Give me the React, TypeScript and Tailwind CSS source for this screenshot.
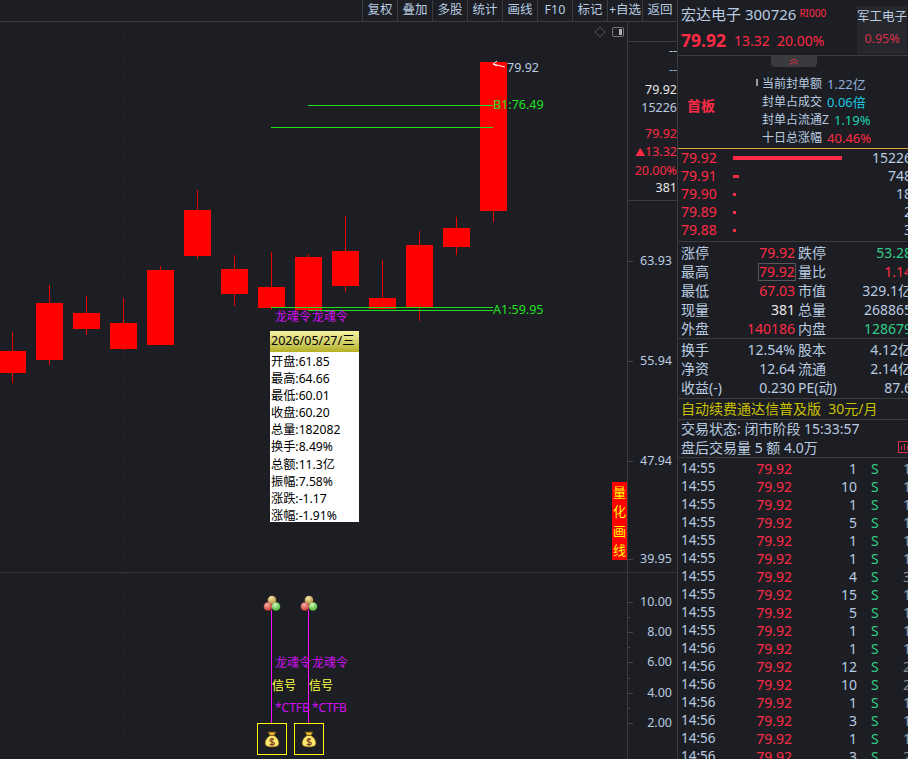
const RED = "text-[#ff2a45]";

const tools = ["复权", "叠加", "多股", "统计", "画线", "F10", "标记", "+自选", "返回"];

// x, bodyTop, bodyBottom, wickTop, wickBottom (page coordinates)
const candles = [
  [-1, 351, 373, 332, 383],
  [36, 303, 360, 285, 365],
  [73, 313, 329, 296, 335],
  [110, 323, 349, 298, 350],
  [147, 270, 345, 266, 345],
  [184, 210, 256, 190, 259],
  [221, 269, 294, 255, 306],
  [258, 287, 308, 252, 310],
  [295, 257, 310, 254, 310],
  [332, 251, 286, 216, 292],
  [369, 298, 309, 260, 310],
  [406, 245, 307, 231, 321],
  [443, 228, 247, 217, 255],
  [480, 62, 211, 62, 222],
];

const tipRows = [
  "开盘:61.85",
  "最高:64.66",
  "最低:60.01",
  "收盘:60.20",
  "总量:182082",
  "换手:8.49%",
  "总额:11.3亿",
  "振幅:7.58%",
  "涨跌:-1.17",
  "涨幅:-1.91%",
];

const book = [
  ["79.92", 109, 4, "15226"],
  ["79.91", 6, 3, "748"],
  ["79.90", 3, 3, "18"],
  ["79.89", 3, 3, "2"],
  ["79.88", 3, 3, "3"],
] as const;

const trades = [
  ["14:55", "1", "1"],
  ["14:55", "10", "1"],
  ["14:55", "1", "1"],
  ["14:55", "5", "1"],
  ["14:55", "1", "1"],
  ["14:55", "1", "1"],
  ["14:55", "4", "3"],
  ["14:55", "15", "1"],
  ["14:55", "5", "1"],
  ["14:55", "1", "1"],
  ["14:56", "1", "1"],
  ["14:56", "12", "2"],
  ["14:56", "10", "2"],
  ["14:56", "1", "1"],
  ["14:56", "3", "1"],
  ["14:56", "1", "1"],
  ["14:56", "3", "2"],
];

function Balls({ left }: { left: number }) {
  return (
    <svg className="absolute" style={{ left, top: 22 }} width="18" height="17" viewBox="0 0 18 17">
      <defs>
        <radialGradient id="by" cx="0.4" cy="0.3" r="0.8">
          <stop offset="0" stopColor="#f4e6b0" />
          <stop offset="1" stopColor="#a87e20" />
        </radialGradient>
        <radialGradient id="br" cx="0.4" cy="0.3" r="0.8">
          <stop offset="0" stopColor="#f8b0a8" />
          <stop offset="1" stopColor="#c02820" />
        </radialGradient>
        <radialGradient id="bg" cx="0.4" cy="0.3" r="0.8">
          <stop offset="0" stopColor="#d0f8b8" />
          <stop offset="1" stopColor="#38a828" />
        </radialGradient>
      </defs>
      <circle cx="9" cy="5" r="4.3" fill="url(#by)" />
      <circle cx="5" cy="11.5" r="4.3" fill="url(#br)" />
      <circle cx="13" cy="11.5" r="4.3" fill="url(#bg)" />
    </svg>
  );
}

function MoneyBag({ left }: { left: number }) {
  return (
    <div className="absolute top-[150px] flex h-[32px] w-[30px] items-center justify-center border border-[#ffff00]" style={{ left }}>
      <svg width="16" height="17" viewBox="0 0 16 17">
        <path d="M4 1 L12 1 L10 4.5 L6 4.5 Z" fill="#e8b830" stroke="#6a4a10" strokeWidth="0.8" />
        <path d="M6 4.5 L10 4.5 C13 6.5 15 9 15 12 C15 15 12.5 16 8 16 C3.5 16 1 15 1 12 C1 9 3 6.5 6 4.5 Z" fill="#ffe870" stroke="#6a4a10" strokeWidth="0.8" />
        <path d="M10 8.5 C9 7.5 6 7.5 6 9.5 C6 11.5 10.5 10.5 10.5 12.5 C10.5 14.2 7 14.2 5.8 13 M8 6.8 L8 15" fill="none" stroke="#7a3a20" strokeWidth="1.1" />
      </svg>
    </div>
  );
}

function AxisLabel({ y, tight, children }: { y: number; tight?: boolean; children: React.ReactNode }) {
  return (
    <div className={`absolute -translate-y-1/2 whitespace-nowrap text-[12.5px] leading-none text-[#b9cbe0] ${tight ? "right-0" : "right-[5px]"}`} style={{ top: y + 1 }}>
      {children}
    </div>
  );
}

function Stat({ a, b, aClass, c, d, dClass, box }: { a: string; b: string; aClass: string; c: string; d: string; dClass: string; box?: boolean }) {
  return (
    <div className="flex h-[18.8px] items-center text-[14px] leading-none">
      <span className="w-[50px] shrink-0 whitespace-nowrap text-[#b9cbe0]">{a}</span>
      <span className="flex w-[64px] shrink-0 justify-end">
        <span className={`flex h-[18px] items-center ${aClass} ${box ? "w-[38px] -mr-[1px] justify-center border border-[#55575c]" : ""}`}>{b}</span>
      </span>
      <span className="ml-[3px] w-[56px] shrink-0 whitespace-nowrap text-[#b9cbe0]">{c}</span>
      <span className={`w-[58px] shrink-0 whitespace-nowrap text-right ${dClass}`}>{d}</span>
    </div>
  );
}

function Info({ label, value, color }: { label: string; value: string; color: string }) {
  return (
    <div className="flex h-[18px] items-center gap-[5px] whitespace-nowrap leading-none">
      <span className="text-[12px] text-[#b9cbe0]">{label}</span>
      <span className={`text-[13px] ${color}`}>{value}</span>
    </div>
  );
}

export default function App() {
  return (
    <div className="flex h-[759px] w-[908px] overflow-hidden bg-[#1c1e23] [font-family:'Noto_Sans','Noto_Sans_CJK_SC',sans-serif]">
      {/* left: chart */}
      <div className="flex h-full w-[678px] shrink-0 flex-col border-r border-[#3a3c40]">
        <div className="flex h-[22px] shrink-0 justify-end border-b border-[#3a3c40]">
          {tools.map((t) => (
            <div key={t} className="flex w-[35px] items-center justify-center whitespace-nowrap border-l border-[#3a3c40] text-[12.5px] leading-none text-[#b9cbe0]">
              {t}
            </div>
          ))}
        </div>

        <div className="flex h-[551px] shrink-0 border-b border-[#33353a]">
          <div className="relative w-[627px] shrink-0 overflow-hidden">
            <svg className="absolute inset-0" width="627" height="550" viewBox="0 22 627 550" shapeRendering="crispEdges">
              <line x1="123.5" y1="22" x2="123.5" y2="572" stroke="#26282d" strokeDasharray="2 3" />
              {candles.map(([x, t, b, wt, wb]) => (
                <g key={x}>
                  <rect x={x + 13} y={wt} width="1" height={wb - wt} fill="#e80000" />
                  <rect x={x} y={t} width="27" height={b - t} fill="#ff0000" />
                </g>
              ))}
              <rect x="308" y="105" width="185" height="1" fill="#1ee01e" />
              <rect x="271" y="127" width="222" height="1" fill="#1ee01e" />
              <rect x="271" y="307" width="222" height="1" fill="#1ee01e" />
              <rect x="308" y="310" width="185" height="1" fill="#1ee01e" />
              <path d="M493 64 L505 67 M493 64 L497 61 M493 64 L497 66" stroke="#fff" fill="none" shapeRendering="auto" />
              <path d="M600 27 L605 32 L600 37 L595 32 Z" fill="none" stroke="#55575c" shapeRendering="auto" />
              <rect x="612.5" y="27.5" width="11" height="9" rx="1.5" fill="none" stroke="#77797e" shapeRendering="auto" />
              <rect x="619" y="29" width="3" height="6" fill="#b0b2b6" />
            </svg>

            <div className="absolute left-[507px] top-[40px] text-[12.5px] leading-none text-[#b9cbe0]">79.92</div>
            <div className="absolute left-[493px] top-[77px] text-[12.5px] leading-none text-[#1ee01e]">B1:76.49</div>
            <div className="absolute left-[493px] top-[282px] text-[12.5px] leading-none text-[#1ee01e]">A1:59.95</div>
            <div className="absolute left-[275px] top-[289px] text-[12px] leading-none text-[#d010f0]">龙魂令</div>
            <div className="absolute left-[312px] top-[289px] text-[12px] leading-none text-[#d010f0]">龙魂令</div>

            {/* hover tooltip */}
            <div className="absolute left-[270px] top-[309px] h-[191px] w-[89px] bg-white text-[12.2px] text-black">
              <div className="flex h-[21px] items-center whitespace-nowrap bg-gradient-to-b from-[#f6f4a4] to-[#b5b020] pl-[1px] text-[12.5px] leading-none">2026/05/27/三</div>
              <div className="pt-[1px]">
                {tipRows.map((r) => (
                  <div key={r} className="flex h-[17.1px] items-center whitespace-nowrap pl-[1px] pt-[1px] leading-none">{r}</div>
                ))}
              </div>
            </div>

            <div className="absolute left-[612px] top-[460px] flex h-[78px] w-[15px] flex-col items-center justify-between bg-[#ff0000] py-[1px] text-[13px] leading-[18px] text-[#ffff00]">
              <span>量</span>
              <span>化</span>
              <span>画</span>
              <span>线</span>
            </div>
          </div>

          <div className="relative w-[50px] shrink-0 border-l border-[#3a3c40]">
            <div className="h-[20px] border-b border-[#3a3c40]" />
            <AxisLabel y={28} tight>--</AxisLabel>
            <AxisLabel y={47} tight><span className="text-[#8fb0d8]">--</span></AxisLabel>
            <AxisLabel y={67} tight><span className="text-[#e8e8e8]">79.92</span></AxisLabel>
            <AxisLabel y={85} tight>15226</AxisLabel>
            <AxisLabel y={111} tight><span className={RED}>79.92</span></AxisLabel>
            <AxisLabel y={129} tight><span className={RED}><span className="text-[10px]">▲</span>13.32</span></AxisLabel>
            <AxisLabel y={148} tight><span className={RED}>20.00%</span></AxisLabel>
            <AxisLabel y={165} tight><span className="text-[#e8e8e8]">381</span></AxisLabel>
            <div className="absolute left-0 top-[178px] h-px w-full bg-[#3a3c40]" />
            <AxisLabel y={238}>63.93</AxisLabel>
            <AxisLabel y={338}>55.94</AxisLabel>
            <AxisLabel y={438}>47.94</AxisLabel>
            <AxisLabel y={536}>39.95</AxisLabel>
            {[239, 339, 439, 537].map((y) => (
              <div key={y} className="absolute left-0 h-px w-[5px] bg-[#44464b]" style={{ top: y }} />
            ))}
          </div>
        </div>

        <div className="flex min-h-0 flex-1">
          <div className="relative w-[627px] shrink-0 overflow-hidden">
            <svg className="absolute inset-0" width="627" height="186" viewBox="0 573 627 186" shapeRendering="crispEdges">
              <line x1="123.5" y1="573" x2="123.5" y2="759" stroke="#26282d" strokeDasharray="2 3" />
              <rect x="271" y="610" width="1" height="113" fill="#ff10ff" />
              <rect x="308" y="610" width="1" height="113" fill="#ff10ff" />
            </svg>
            <Balls left={263} />
            <Balls left={300} />
            <div className="absolute left-[275px] top-[84px] text-[12px] leading-none text-[#d010f0]">龙魂令</div>
            <div className="absolute left-[312px] top-[84px] text-[12px] leading-none text-[#d010f0]">龙魂令</div>
            <div className="absolute left-[272px] top-[107px] text-[12px] leading-none text-[#ffff40]">信号</div>
            <div className="absolute left-[309px] top-[107px] text-[12px] leading-none text-[#ffff40]">信号</div>
            <div className="absolute left-[275px] top-[129px] text-[12px] leading-none text-[#d010f0]">*CTFB</div>
            <div className="absolute left-[312px] top-[129px] text-[12px] leading-none text-[#d010f0]">*CTFB</div>
            <MoneyBag left={257} />
            <MoneyBag left={294} />
          </div>
          <div className="relative w-[50px] shrink-0 border-l border-[#3a3c40]">
            <AxisLabel y={28}>10.00</AxisLabel>
            <AxisLabel y={58}>8.00</AxisLabel>
            <AxisLabel y={88}>6.00</AxisLabel>
            <AxisLabel y={119}>4.00</AxisLabel>
            <AxisLabel y={149}>2.00</AxisLabel>
            {[29, 44, 59, 74, 89, 105, 120, 135, 150].map((y, i) => (
              <div key={y} className={`absolute left-0 h-px bg-[#44464b] ${i % 2 === 0 ? "w-[5px]" : "w-[2px]"}`} style={{ top: y }} />
            ))}
          </div>
        </div>
      </div>

      {/* right: quote panel */}
      <div className="flex h-full w-[230px] shrink-0 flex-col overflow-hidden">
        <div className="flex h-[56px] shrink-0 border-b border-[#3a3c40] pl-[3px]">
          <div className="w-[176px] shrink-0">
            <div className="flex h-[29px] items-center whitespace-nowrap">
              <span className="text-[15px] leading-none text-[#b9cbe0]">宏达电子 300726</span>
              <span className="mb-[3px] ml-[3px] text-[10px] leading-none text-[#ff2a45]">RI000</span>
            </div>
            <div className="flex items-center whitespace-nowrap pt-[3px] leading-none">
              <span className={`w-[53px] text-[17.5px] font-bold ${RED}`}>79.92</span>
              <span className={`w-[43px] text-[14px] ${RED}`}>13.32</span>
              <span className={`text-[14px] ${RED}`}>20.00%</span>
            </div>
          </div>
          <div className="mt-[6px] flex h-[48px] w-[50px] flex-col items-center whitespace-nowrap bg-[#26282d] pt-[5px] leading-none">
            <span className="text-[12.5px] text-[#b9cbe0]">军工电子</span>
            <span className="mt-[9px] text-[12.5px] text-[#d8304a]">0.95%</span>
          </div>
        </div>

        <div className="relative flex h-[93px] shrink-0 border-b border-[#d9a53a]">
          <div className="absolute left-[93px] top-0 flex h-[11px] w-[46px] items-center justify-center rounded-b-[4px] bg-[#3a3b3e]">
            <svg width="10" height="7" viewBox="0 0 10 7" fill="none" stroke="#e03040" strokeWidth="1">
              <path d="M1 3.5 L5 1 L9 3.5 M1 6.5 L5 4 L9 6.5" />
            </svg>
          </div>
          <div className={`w-[84px] shrink-0 pl-[9px] pt-[43px] text-[14px] font-bold leading-none ${RED}`}>首板</div>
          <div className="pt-[19px]">
            <Info label="当前封单额" value="1.22亿" color="text-[#8fb0d8]" />
            <Info label="封单占成交" value="0.06倍" color="text-[#19c8e0]" />
            <Info label="封单占流通Z" value="1.19%" color="text-[#19d0b0]" />
            <Info label="十日总涨幅" value="40.46%" color={RED} />
          </div>
          <div className="absolute left-[78px] top-[23px] h-[7px] w-[2px] bg-[#9a9ca0]" />
        </div>

        <div className="flex h-[93px] shrink-0 flex-col border-b border-[#3a3c40] pl-[3px]">
          {book.map(([p, w, h, v]) => (
            <div key={p} className="flex h-[18px] shrink-0 items-center text-[14px] leading-none">
              <span className={`w-[52px] shrink-0 ${RED}`}>{p}</span>
              <div className="w-[125px] shrink-0">
                <div className="bg-[#ff2a45]" style={{ width: w, height: h }} />
              </div>
              <span className="w-[54px] shrink-0 text-right text-[#b9cbe0]">{v}</span>
            </div>
          ))}
        </div>

        <div className="flex h-[97px] shrink-0 flex-col border-b border-[#3a3c40] pl-[3px] pt-[2px]">
          <Stat a="涨停" b="79.92" aClass={RED} c="跌停" d="53.28" dClass="text-[#33cc88]" />
          <Stat a="最高" b="79.92" aClass={RED} c="量比" d="1.14" dClass={RED} box />
          <Stat a="最低" b="67.03" aClass={RED} c="市值" d="329.1亿" dClass="text-[#b9cbe0]" />
          <Stat a="现量" b="381" aClass="text-[#e8e8e8]" c="总量" d="268865" dClass="text-[#b9cbe0]" />
          <Stat a="外盘" b="140186" aClass={RED} c="内盘" d="128679" dClass="text-[#33cc88]" />
        </div>

        <div className="flex h-[60px] shrink-0 flex-col border-b border-[#3a3c40] pl-[3px] pt-[2px]">
          <Stat a="换手" b="12.54%" aClass="text-[#b9cbe0]" c="股本" d="4.12亿" dClass="text-[#b9cbe0]" />
          <Stat a="净资" b="12.64" aClass="text-[#b9cbe0]" c="流通" d="2.14亿" dClass="text-[#b9cbe0]" />
          <Stat a="收益(-)" b="0.230" aClass="text-[#b9cbe0]" c="PE(动)" d="87.6" dClass="text-[#b9cbe0]" />
        </div>

        <div className="flex h-[21px] shrink-0 items-center whitespace-nowrap border-b border-[#3a3c40] pl-[3px] text-[14px] leading-none text-[#c8c000]">
          自动续费通达信普及版&nbsp;&nbsp;30元/月
        </div>

        <div className="relative h-[38px] shrink-0 whitespace-nowrap border-b border-[#3a3c40] pl-[3px] text-[14px] leading-none text-[#b9cbe0]">
          <div className="-mt-[1px] flex h-[19px] items-center">交易状态: 闭市阶段 15:33:57</div>
          <div className="flex h-[19px] items-center">盘后交易量 5 额 4.0万</div>
          <svg className="absolute right-[-4px] top-[21px]" width="14" height="13" viewBox="0 0 14 13" fill="none" stroke="#d8304a" shapeRendering="crispEdges">
            <rect x="0.5" y="0.5" width="13" height="11" rx="1" />
            <path d="M3.5 9V5M6.5 9V3M9.5 9V5" />
          </svg>
        </div>

        <div className="flex flex-col pl-[3px] pt-[1.5px]">
          {trades.map(([t, q, n], i) => (
            <div key={i} className="flex h-[18px] shrink-0 items-center whitespace-nowrap text-[14px] leading-none">
              <span className="w-[49px] shrink-0 text-[13.5px] text-[#b9cbe0]">{t}</span>
              <span className={`w-[62px] shrink-0 text-right ${RED}`}>79.92</span>
              <span className="w-[65px] shrink-0 text-right text-[#b9cbe0]">{q}</span>
              <span className="ml-[14px] w-[32px] shrink-0 text-[#33cc88]">S</span>
              <span className={n === "1" ? "text-[#8fa0b0]" : "text-[#8a8c90]"}>{n}</span>
            </div>
          ))}
        </div>
      </div>
    </div>
  );
}
